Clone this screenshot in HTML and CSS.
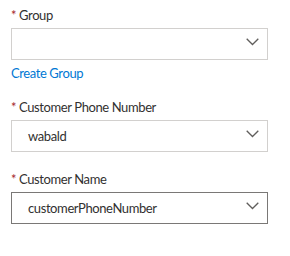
FILE: index.html
```html
<!DOCTYPE html>
<html>
<head>
<meta charset="utf-8">
<link rel="stylesheet" href="styles.css">
</head>
<body>
<div class="form">
  <div class="field f1">
    <div class="label"><span class="req">*</span> Group</div>
    <div class="select"><span class="value"></span><svg class="chev" width="13" height="8" viewBox="0 0 13 8"><path d="M0.7 0.7 L6.5 6.5 L12.3 0.7" fill="none" stroke="#605e5c" stroke-width="1.3"/></svg></div>
    <a class="link" href="#">Create Group</a>
  </div>
  <div class="field f2">
    <div class="label"><span class="req">*</span> Customer Phone Number</div>
    <div class="select"><span class="value">wabald</span><svg class="chev" width="13" height="8" viewBox="0 0 13 8"><path d="M0.7 0.7 L6.5 6.5 L12.3 0.7" fill="none" stroke="#605e5c" stroke-width="1.3"/></svg></div>
  </div>
  <div class="field f3">
    <div class="label"><span class="req">*</span> Customer Name</div>
    <div class="select active"><span class="value">customerPhoneNumber</span><svg class="chev" width="13" height="8" viewBox="0 0 13 8"><path d="M0.7 0.7 L6.5 6.5 L12.3 0.7" fill="none" stroke="#605e5c" stroke-width="1.3"/></svg></div>
  </div>
</div>
</body>
</html>
```
FILE: styles.css
```css
html, body {
  margin: 0;
  padding: 0;
  background: #ffffff;
}
body {
  font-family: Lato, "Noto Sans", sans-serif;
  font-size: 13px;
  letter-spacing: -0.4px;
  color: #323130;
}
.form {
  display: flex;
  flex-direction: column;
  padding: 5px 0 0 11px;
  width: 257px;
}
.field {
  display: flex;
  flex-direction: column;
}
.f2 { margin-top: 14px; }
.f3 { margin-top: 17px; }
.label {
  line-height: 20px;
  height: 20px;
  margin-bottom: 3px;
}
.req {
  color: #a4262c;
}
.select {
  box-sizing: border-box;
  height: 32px;
  border: 1px solid #d2d0ce;
  display: flex;
  align-items: center;
  padding: 0 8px 0 16px;
}
.select.active {
  border-color: #7a7876;
}
.value {
  flex: 1;
}
.chev {
  display: block;
  margin-top: -4px;
}
.link {
  margin-top: 3px;
  line-height: 20px;
  color: #0078d4;
  text-decoration: none;
  align-self: flex-start;
}
```
